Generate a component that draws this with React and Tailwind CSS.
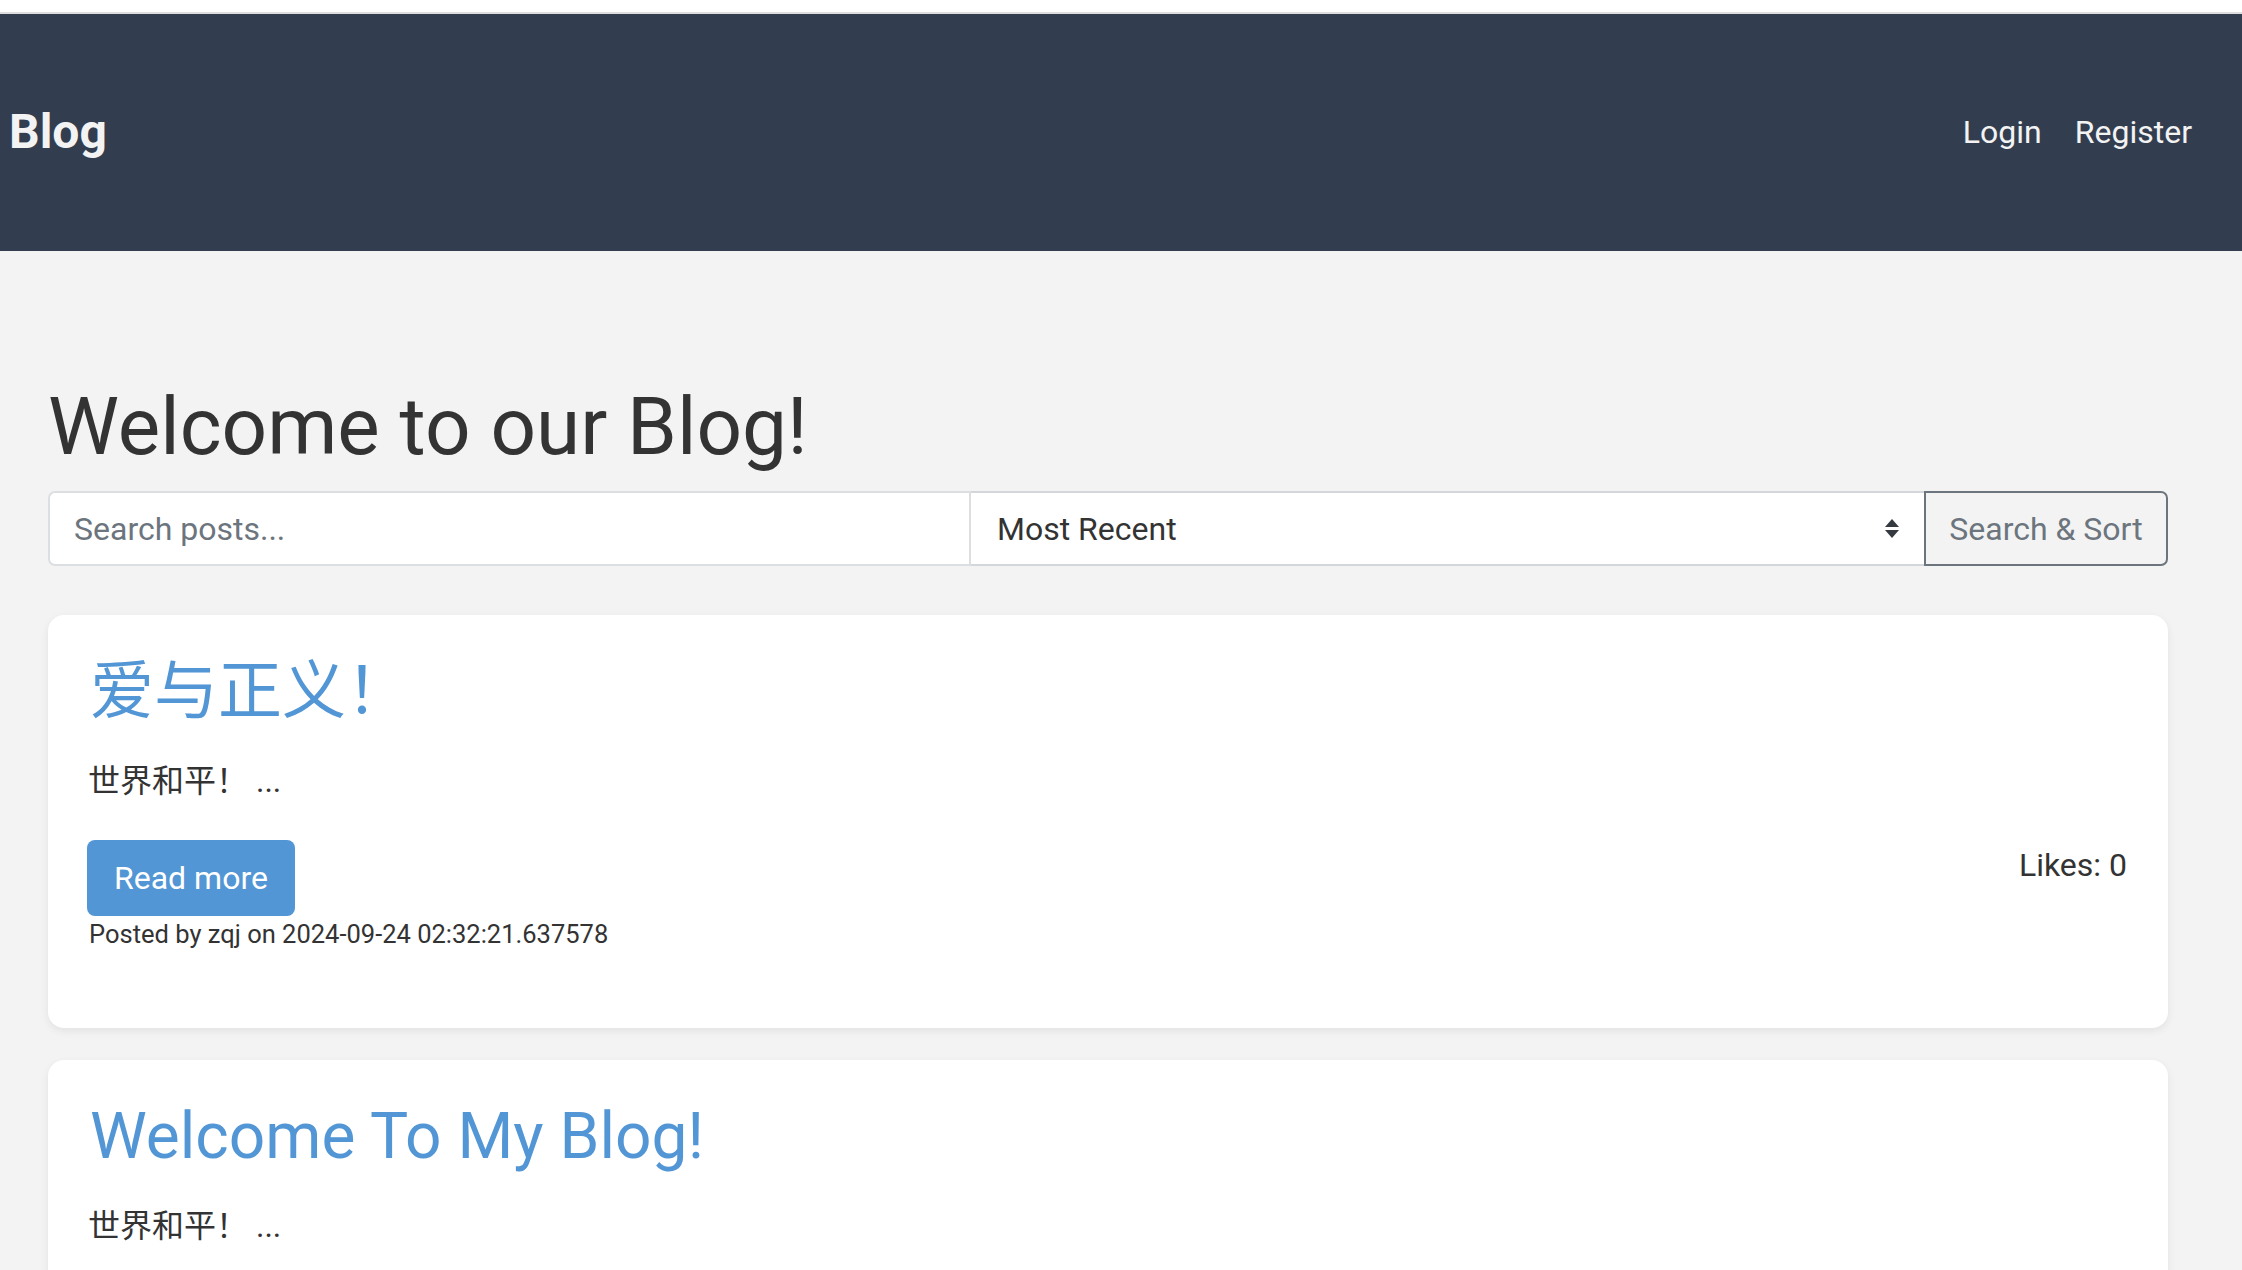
import { useState } from 'react';

const posts = [
  {
    id: 2,
    title: '爱与正义！',
    excerpt: '世界和平！ ...',
    author: 'zqj',
    date: '2024-09-24 02:32:21.637578',
    likes: 0,
  },
  {
    id: 1,
    title: 'Welcome To My Blog!',
    excerpt: '世界和平！ ...',
    author: 'zqj',
    date: '2024-09-24 02:30:11.482913',
    likes: 0,
  },
];

function PostCard({ post }) {
  return (
    <div className="bg-white rounded-[16px] shadow-[0_3px_8px_rgba(0,0,0,0.07)] pl-[42px] pr-[41px] pt-[38px] pb-[75px] mb-[32px]">
      <h2 className="text-[64px] leading-[77px] font-normal text-[#5296d5]">{post.title}</h2>
      <p className="mt-[27px] -ml-[2px] text-[32px] leading-[48px] text-[#333]">{post.excerpt}</p>
      <div className="mt-[35px] flex justify-between items-start">
        <div>
          <button className="h-[76px] px-[27px] rounded-[8px] bg-[#5296d5] text-white text-[32px] leading-[48px] -ml-[3px]">
            Read more
          </button>
          <p className="text-[25.5px] leading-[37px] text-[#333] -ml-[1px]">
            Posted by {post.author} on {post.date}
          </p>
        </div>
        <div className="mt-[1px] text-[32px] leading-[48px] text-[#333]">Likes: {post.likes}</div>
      </div>
    </div>
  );
}

export default function App() {
  const [search, setSearch] = useState('');
  const [sort, setSort] = useState('recent');

  return (
    <div className="min-h-screen bg-[#f3f3f3] font-['Roboto','Noto_Sans_CJK_SC',sans-serif] text-[#333]">
      <div className="h-[14px] bg-white border-b-2 border-[#dedede]" />

      {/* Navbar */}
      <nav className="h-[237px] bg-[#323e50] flex items-center justify-between pl-[9px] pr-[50px]">
        <a className="text-[48px] font-bold text-[#f3f3f3] leading-none -mt-[2px]">Blog</a>
        <div className="flex items-center gap-[33px] text-[32px] text-[#f3f3f3] -mt-[2px]">
          <a>Login</a>
          <a>Register</a>
        </div>
      </nav>

      <main className="ml-[48px] w-[2120px] pt-[128px]">
        <h1 className="text-[80px] leading-[96px] font-normal text-[#333]">Welcome to our Blog!</h1>

        {/* Search */}
        <div className="mt-[16px] flex h-[75px]">
          <input
            type="text"
            placeholder="Search posts..."
            value={search}
            onChange={(e) => setSearch(e.target.value)}
            className="w-[923px] h-full bg-white border-2 border-[#dcdfe2] rounded-l-[7px] pl-[24px] text-[32px] text-[#333] placeholder:text-[#6c757d] outline-none"
          />
          <div className="relative flex-1 h-full">
            <select
              value={sort}
              onChange={(e) => setSort(e.target.value)}
              className="appearance-none w-full h-full bg-white border-y-2 border-[#d3d7db] pl-[26px] text-[32px] text-[#333] outline-none"
            >
              <option value="recent">Most Recent</option>
              <option value="likes">Most Liked</option>
            </select>
            <svg
              className="absolute right-[24px] top-[28px] pointer-events-none"
              width="16"
              height="20"
              viewBox="0 0 16 20"
            >
              <path d="M8 0 L15 8 H1 Z M1 11 H15 L8 19 Z" fill="#343a40" />
            </svg>
          </div>
          <button className="w-[244px] h-full border-2 border-[#6c757d] rounded-r-[7px] text-[32px] text-[#6c757d]">
            Search &amp; Sort
          </button>
        </div>

        <div className="mt-[49px]">
          {posts.map((p) => (
            <PostCard key={p.id} post={p} />
          ))}
        </div>
      </main>
    </div>
  );
}
